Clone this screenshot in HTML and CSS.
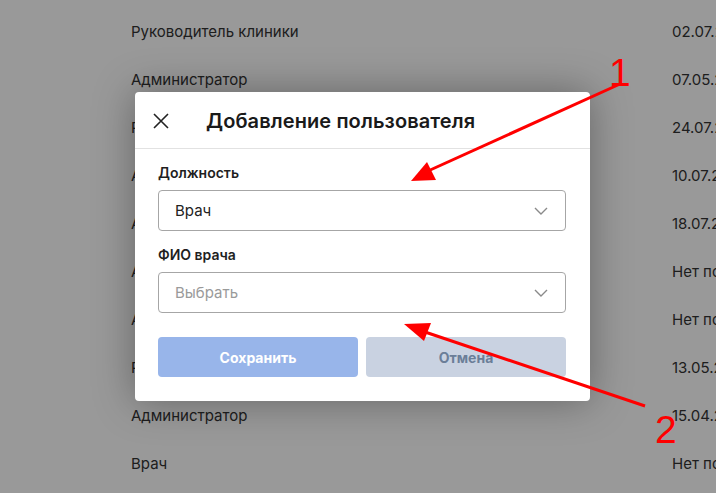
FILE: index.html
```html
<!DOCTYPE html>
<html lang="ru">
<head>
<meta charset="utf-8">
<link rel="stylesheet" href="styles.css">
</head>
<body>
<div class="table">
  <div class="row"><span class="role">Руководитель клиники</span><span class="date">02.07.2024</span></div>
  <div class="row"><span class="role">Администратор</span><span class="date">07.05.2024</span></div>
  <div class="row"><span class="role">Руководитель клиники</span><span class="date">24.07.2024</span></div>
  <div class="row"><span class="role">Администратор</span><span class="date">10.07.2024</span></div>
  <div class="row"><span class="role">Администратор</span><span class="date">18.07.2024</span></div>
  <div class="row"><span class="role">Администратор</span><span class="date">Нет посещений</span></div>
  <div class="row"><span class="role">Администратор</span><span class="date">Нет посещений</span></div>
  <div class="row"><span class="role">Руководитель клиники</span><span class="date">13.05.2024</span></div>
  <div class="row"><span class="role">Администратор</span><span class="date">15.04.2024</span></div>
  <div class="row"><span class="role">Врач</span><span class="date">Нет посещений</span></div>
</div>
<div class="overlay"></div>
<div class="modal">
  <div class="modal-head">
    <svg class="close" width="18" height="18" viewBox="0 0 18 18"><path d="M2 2L16 16M16 2L2 16" stroke="#222" stroke-width="1.6" fill="none"/></svg>
    <h2 class="title">Добавление пользователя</h2>
  </div>
  <div class="modal-body">
    <label class="label">Должность</label>
    <div class="select"><span class="value">Врач</span><svg class="chev" width="14" height="8" viewBox="0 0 14 8"><path d="M1 1L7 7L13 1" stroke="#8a8a8a" stroke-width="1.4" fill="none"/></svg></div>
    <label class="label label-2">ФИО врача</label>
    <div class="select"><span class="value placeholder">Выбрать</span><svg class="chev" width="14" height="8" viewBox="0 0 14 8"><path d="M1 1L7 7L13 1" stroke="#8a8a8a" stroke-width="1.4" fill="none"/></svg></div>
    <div class="actions">
      <button class="btn btn-save">Сохранить</button>
      <button class="btn btn-cancel">Отмена</button>
    </div>
  </div>
</div>
<svg class="annot" width="716" height="493" viewBox="0 0 716 493">
  <line x1="620" y1="84" x2="428" y2="171" stroke="#ff0000" stroke-width="3"/>
  <polygon points="411,181 427,162 436,180" fill="#ff0000"/>
  <line x1="645" y1="406" x2="425" y2="332" stroke="#ff0000" stroke-width="3"/>
  <polygon points="404,324 431,323 424,341" fill="#ff0000"/>
  <text x="609" y="86" class="num">1</text>
  <text x="655" y="443" class="num">2</text>
</svg>
</body>
</html>
```
FILE: styles.css
```css
html, body {
  margin: 0;
  padding: 0;
}
body {
  width: 716px;
  height: 493px;
  overflow: hidden;
  background: #ffffff;
  font-family: Inter, "Noto Sans", sans-serif;
  color: #333;
  position: relative;
}
.table {
  padding-top: 7px;
}
.row {
  height: 48px;
  display: flex;
  align-items: center;
  font-size: 15px;
  color: #333;
  white-space: nowrap;
}
.role {
  margin-left: 131px;
  flex: 0 0 541px;
}
.date {
  flex: 0 0 auto;
}
.overlay {
  position: absolute;
  inset: 0;
  background: rgba(0, 0, 0, 0.4);
}
.modal {
  position: absolute;
  left: 135px;
  top: 92px;
  width: 455px;
  height: 309px;
  background: #fff;
  border-radius: 4px;
  box-shadow: 0 0 40px rgba(0, 0, 0, 0.35);
  box-sizing: border-box;
}
.modal-head {
  height: 57px;
  border-bottom: 1px solid #e2e2e2;
  display: flex;
  align-items: center;
  padding-left: 17px;
  padding-top: 1px;
  box-sizing: border-box;
}
.close {
  display: block;
}
.title {
  margin: 0 0 0 36px;
  font-size: 20px;
  font-weight: 600;
  color: #1a1a1a;
  letter-spacing: 0.1px;
}
.modal-body {
  padding: 14px 24px 24px 23px;
  display: flex;
  flex-direction: column;
}
.label {
  font-size: 14px;
  font-weight: 600;
  line-height: 20px;
  color: #1f1f1f;
  margin-bottom: 7px;
}
.label-2 {
  margin-top: 14px;
}
.select {
  height: 41px;
  border: 1px solid #a6a6a6;
  border-radius: 4px;
  box-sizing: border-box;
  display: flex;
  align-items: center;
  justify-content: space-between;
  padding: 0 17px 0 16px;
}
.value {
  font-size: 15px;
  color: #222;
}
.placeholder {
  color: #9a9a9a;
}
.chev {
  display: block;
}
.actions {
  display: flex;
  gap: 8px;
  margin-top: 24px;
}
.btn {
  width: 200px;
  height: 40px;
  border: none;
  border-radius: 4px;
  font-family: Inter, "Noto Sans", sans-serif;
  font-size: 14px;
  font-weight: 700;
  padding: 0;
}
.btn-save {
  background: #98b5ea;
  color: #fff;
}
.btn-cancel {
  background: #c9d2e1;
  color: #6b7e98;
}
.annot {
  position: absolute;
  left: 0;
  top: 0;
}
.num {
  font-family: "Liberation Sans", sans-serif;
  font-size: 39px;
  fill: #ff0000;
}
```
